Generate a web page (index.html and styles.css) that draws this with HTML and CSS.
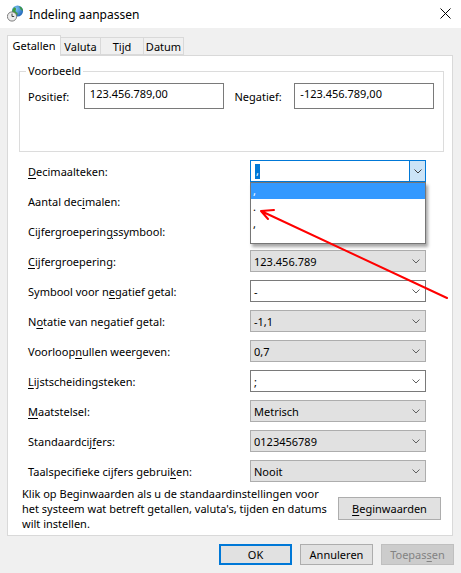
FILE: index.html
```html
<!DOCTYPE html>
<html lang="nl">
<head>
<meta charset="utf-8">
<title>Indeling aanpassen</title>
<link rel="stylesheet" href="styles.css">
</head>
<body>
<div class="window">
  <div class="titlebar">
    <svg class="app-icon" viewBox="0 0 17 17" width="17" height="17">
      <defs>
        <radialGradient id="g" cx="0.35" cy="0.3" r="0.8">
          <stop offset="0" stop-color="#7cc4f5"/>
          <stop offset="1" stop-color="#1a5fb4"/>
        </radialGradient>
      </defs>
      <circle cx="10.5" cy="6" r="5.6" fill="url(#g)"/>
      <path d="M7.5 2.2 C9 2.5 9.5 4 8.6 5.2 C8 6 9.2 7.2 10.2 7.8 C11 8.3 10.6 10 9.6 11.2 C7.2 10.5 5.4 8 5.2 6 C5.6 4.3 6.4 3 7.5 2.2 Z" fill="#3f9b3a"/>
      <path d="M12.5 1.2 C14.5 2 15.8 3.8 16 5.8 C14.8 5.6 13.6 4.8 13.2 3.6 C12.8 2.8 12.3 2 12.5 1.2 Z" fill="#3f9b3a"/>
      <circle cx="5" cy="11.5" r="4.6" fill="#ececec" stroke="#707070" stroke-width="0.9"/>
      <path d="M5 8.6 V11.5 H7.2" fill="none" stroke="#333" stroke-width="0.9"/>
    </svg>
    <span class="title">Indeling aanpassen</span>
    <svg class="close" viewBox="0 0 11 11" width="11" height="11">
      <path d="M0.5 0.5 L10.5 10.5 M10.5 0.5 L0.5 10.5" stroke="#000" stroke-width="1" fill="none"/>
    </svg>
  </div>

  <div class="tabs">
    <div class="tab active">Getallen</div>
    <div class="tab t-valuta">Valuta</div>
    <div class="tab t-tijd">Tijd</div>
    <div class="tab t-datum">Datum</div>
  </div>

  <div class="panel">
    <fieldset class="group">
      <legend>Voorbeeld</legend>
      <div class="sample-row">
        <span class="s-label">Positief:</span>
        <div class="textbox">123.456.789,00</div>
        <span class="s-label neg">Negatief:</span>
        <div class="textbox">-123.456.789,00</div>
      </div>
    </fieldset>

    <div class="settings">
      <div class="row">
        <span class="label"><u>D</u>ecimaalteken:</span>
        <div class="combo edit focus">
          <span class="sel">,</span>
          <span class="drop-btn"><svg class="chev" viewBox="0 0 8 5" width="8" height="5"><path d="M0.5 0.5 L4 4 L7.5 0.5" fill="none" stroke="#404040" stroke-width="1"/></svg></span>
          <div class="droplist">
            <div class="item hi">,</div>
            <div class="item i2">.</div>
            <div class="item i3">,</div>
          </div>
        </div>
      </div>
      <div class="row">
        <span class="label">Aantal dec<u>i</u>malen:</span>
        <div class="combo list"><svg class="chev" viewBox="0 0 8 5" width="8" height="5"><path d="M0.5 0.5 L4 4 L7.5 0.5" fill="none" stroke="#606060" stroke-width="1"/></svg></div>
      </div>
      <div class="row">
        <span class="label">Cijfergroeperin<u>g</u>ssymbool:</span>
        <div class="combo edit"><svg class="chev" viewBox="0 0 8 5" width="8" height="5"><path d="M0.5 0.5 L4 4 L7.5 0.5" fill="none" stroke="#606060" stroke-width="1"/></svg></div>
      </div>
      <div class="row">
        <span class="label"><u>C</u>ijfergroepering:</span>
        <div class="combo list"><span class="val">123.456.789</span><svg class="chev" viewBox="0 0 8 5" width="8" height="5"><path d="M0.5 0.5 L4 4 L7.5 0.5" fill="none" stroke="#606060" stroke-width="1"/></svg></div>
      </div>
      <div class="row">
        <span class="label">Symbool voor n<u>e</u>gatief getal:</span>
        <div class="combo edit"><span class="val">-</span><svg class="chev" viewBox="0 0 8 5" width="8" height="5"><path d="M0.5 0.5 L4 4 L7.5 0.5" fill="none" stroke="#606060" stroke-width="1"/></svg></div>
      </div>
      <div class="row">
        <span class="label">N<u>o</u>tatie van negatief getal:</span>
        <div class="combo list"><span class="val">-1,1</span><svg class="chev" viewBox="0 0 8 5" width="8" height="5"><path d="M0.5 0.5 L4 4 L7.5 0.5" fill="none" stroke="#606060" stroke-width="1"/></svg></div>
      </div>
      <div class="row">
        <span class="label">Voorloop<u>n</u>ullen weergeven:</span>
        <div class="combo list"><span class="val">0,7</span><svg class="chev" viewBox="0 0 8 5" width="8" height="5"><path d="M0.5 0.5 L4 4 L7.5 0.5" fill="none" stroke="#606060" stroke-width="1"/></svg></div>
      </div>
      <div class="row">
        <span class="label"><u>L</u>ijstscheidingsteken:</span>
        <div class="combo edit"><span class="val">;</span><svg class="chev" viewBox="0 0 8 5" width="8" height="5"><path d="M0.5 0.5 L4 4 L7.5 0.5" fill="none" stroke="#606060" stroke-width="1"/></svg></div>
      </div>
      <div class="row">
        <span class="label"><u>M</u>aatstelsel:</span>
        <div class="combo list"><span class="val">Metrisch</span><svg class="chev" viewBox="0 0 8 5" width="8" height="5"><path d="M0.5 0.5 L4 4 L7.5 0.5" fill="none" stroke="#606060" stroke-width="1"/></svg></div>
      </div>
      <div class="row">
        <span class="label">Standaardcij<u>f</u>ers:</span>
        <div class="combo list"><span class="val">0123456789</span><svg class="chev" viewBox="0 0 8 5" width="8" height="5"><path d="M0.5 0.5 L4 4 L7.5 0.5" fill="none" stroke="#606060" stroke-width="1"/></svg></div>
      </div>
      <div class="row">
        <span class="label">Taalspecifieke cijfers gebrui<u>k</u>en:</span>
        <div class="combo list"><span class="val">Nooit</span><svg class="chev" viewBox="0 0 8 5" width="8" height="5"><path d="M0.5 0.5 L4 4 L7.5 0.5" fill="none" stroke="#606060" stroke-width="1"/></svg></div>
      </div>
    </div>

    <div class="reset">
      <p class="reset-text">Klik op Beginwaarden als u de standaardinstellingen voor<br>het systeem wat betreft getallen, valuta's, tijden en datums<br>wilt instellen.</p>
      <button class="btn reset-btn"><u>B</u>eginwaarden</button>
    </div>
  </div>

  <div class="buttons">
    <button class="btn default">OK</button>
    <button class="btn">Annuleren</button>
    <button class="btn disabled">Toepas<u>s</u>en</button>
  </div>
</div>

<svg class="annotation" viewBox="0 0 461 573" width="461" height="573">
  <path d="M447 298 L261 211 M261 211 L274 210 M261 211 L268 219" stroke="#ff0000" stroke-width="2" fill="none" stroke-linecap="round" stroke-linejoin="round"/>
</svg>
</body>
</html>
```

FILE: styles.css
```css
* {
  box-sizing: border-box;
}

html, body {
  margin: 0;
  padding: 0;
}

body {
  width: 461px;
  height: 573px;
  background: #f0f0f0;
  font-family: "Noto Sans", "Segoe UI", sans-serif;
  font-size: 11px;
  color: #000;
  position: relative;
  overflow: hidden;
}

u {
  text-decoration: underline;
  text-underline-offset: 2px;
  text-decoration-thickness: 1px;
}

/* Title bar */
.titlebar {
  height: 28px;
  background: #fff;
  display: flex;
  align-items: center;
  padding-left: 7px;
}

.app-icon {
  margin-right: 5px;
  margin-top: -2px;
}

.title {
  flex: 1;
  font-size: 12px;
}

.close {
  margin-right: 10px;
  margin-top: -1px;
}

/* Tabs */
.tabs {
  display: flex;
  align-items: flex-end;
  margin: 7px 0 -1px 7px;
  height: 21px;
  position: relative;
  z-index: 2;
}

.tab {
  height: 18px;
  border: 1px solid #d9d9d9;
  border-left: none;
  background: #f0f0f0;
  display: flex;
  align-items: center;
  justify-content: center;
  margin-bottom: 1px;
}

.tab.active {
  width: 54px;
  height: 21px;
  margin-bottom: 0;
  border-left: 1px solid #d9d9d9;
  border-bottom: none;
  background: #fff;
  padding-bottom: 1px;
}

.t-valuta { width: 40px; }
.t-tijd { width: 43px; }
.t-datum { width: 40px; }

/* Panel */
.panel {
  margin-left: 7px;
  width: 446px;
  height: 481px;
  background: #fff;
  border: 1px solid #d9d9d9;
  display: flex;
  flex-direction: column;
  position: relative;
  z-index: 1;
}

.group {
  margin: 7px 8px 0 11px;
  height: 89px;
  border: 1px solid #dcdcdc;
  padding: 4px 9px 0 8px;
  min-width: 0;
}

.group legend {
  padding: 0 2px;
  margin-left: -2px;
  line-height: 16px;
}

.sample-row {
  display: flex;
  align-items: center;
}

.s-label {
  width: 56px;
}

.s-label.neg {
  width: 60px;
  margin-left: 11px;
}

.textbox {
  width: 140px;
  height: 26px;
  border: 1px solid #7a7a7a;
  line-height: 19px;
  padding: 0 5px;
  white-space: nowrap;
}

/* Settings rows */
.settings {
  margin-top: 8px;
  padding-left: 20px;
  display: flex;
  flex-direction: column;
  gap: 8px;
}

.row {
  display: flex;
  align-items: center;
  height: 22px;
}

.label {
  width: 222px;
}

.combo {
  width: 176px;
  height: 22px;
  border: 1px solid #adadad;
  background: #e1e1e1;
  display: flex;
  align-items: center;
  padding-left: 3px;
  position: relative;
}

.combo.edit {
  background: #fff;
  border-color: #7a7a7a;
}

.combo .chev {
  margin-left: auto;
  margin-right: 5px;
}

.combo.focus {
  border-color: #0078d7;
  z-index: 3;
}

.combo .sel {
  background: #0078d7;
  color: #fff;
  width: 5px;
  height: 15px;
  line-height: 14px;
  text-align: center;
  margin-left: 1px;
}

.drop-btn {
  margin-left: auto;
  width: 17px;
  height: 22px;
  margin-top: -1px;
  margin-bottom: -1px;
  margin-right: -1px;
  border: 1px solid #0078d7;
  background: #cce4f7;
  display: flex;
  align-items: center;
  justify-content: center;
}

.drop-btn .chev {
  margin: 0;
}

.droplist {
  position: absolute;
  left: -1px;
  top: 21px;
  width: 176px;
  height: 62px;
  background: #fff;
  border: 1px solid #767676;
  box-shadow: 2px 3px 3px rgba(0, 0, 0, 0.35);
  padding-bottom: 6px;
}

.item {
  height: 16px;
  line-height: 16px;
  padding-left: 2px;
}

.item.hi {
  background: #3399ff;
  color: #fff;
}

.item.i3 {
  height: 22px;
  line-height: 18px;
}

/* Reset */
.reset {
  margin-top: 4px;
  padding-left: 14px;
  display: flex;
  align-items: center;
}

.reset-text {
  margin: 0;
  flex: 1;
  line-height: 15px;
  white-space: nowrap;
}

.btn {
  font-family: inherit;
  font-size: 11px;
  color: #000;
  background: #e1e1e1;
  border: 1px solid #adadad;
  height: 21px;
  width: 73px;
  padding: 0;
  margin: 0;
}

.reset-btn {
  width: 103px;
  height: 23px;
  margin-right: 11px;
}

.buttons {
  display: flex;
  justify-content: flex-end;
  gap: 8px;
  margin-top: 8px;
  padding-right: 7px;
}

.btn.default {
  border: 2px solid #0078d7;
}

.btn.disabled {
  background: #cccccc;
  border-color: #bfbfbf;
  color: #838383;
}

.annotation {
  position: absolute;
  left: 0;
  top: 0;
  pointer-events: none;
  z-index: 10;
}
```
